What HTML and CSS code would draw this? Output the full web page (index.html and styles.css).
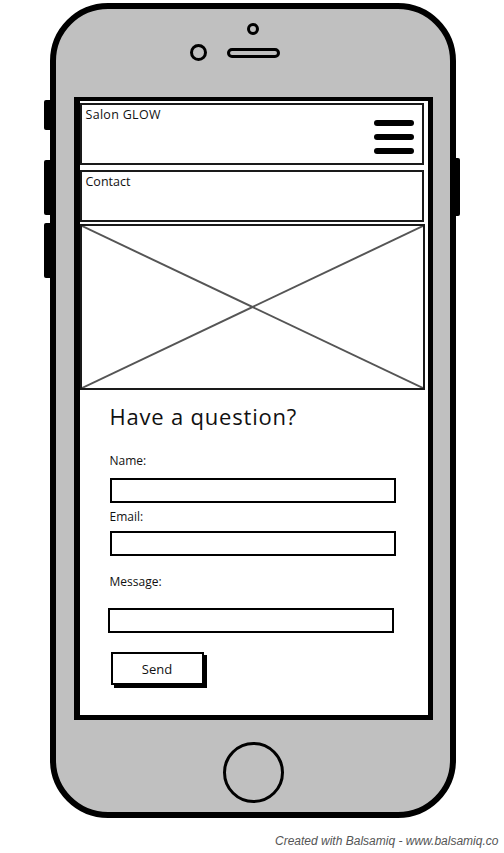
FILE: index.html
```html
<!doctype html>
<html lang="en">
<head>
	<meta charset="UTF-8">
	<title>Salon GLOW - Contact</title>
	<link rel="stylesheet" href="styles.css">
</head>
<body>
	<div class="page">
		<div class="phone">
			<span class="side-btn side-btn-1"></span>
			<span class="side-btn side-btn-2"></span>
			<span class="side-btn side-btn-3"></span>
			<span class="side-btn side-btn-r"></span>

			<span class="sensor-dot"></span>
			<div class="sensor-row">
				<span class="camera"></span>
				<span class="speaker"></span>
			</div>

			<div class="screen">
				<div class="panel header">
					<span class="brand">Salon GLOW</span>
					<a href="javascript:;" class="burger">
						<i></i><i></i><i></i>
					</a>
				</div>
				<div class="panel nav">Contact</div>
				<div class="picture">
					<svg viewBox="0 0 345 166" preserveAspectRatio="none">
						<line x1="0" y1="0" x2="345" y2="166"/>
						<line x1="345" y1="0" x2="0" y2="166"/>
					</svg>
				</div>
				<form class="form" action="javascript:;">
					<h1 class="title">Have a question?</h1>
					<label class="label label-name">Name:</label>
					<input class="field" type="text">
					<label class="label label-email">Email:</label>
					<input class="field" type="text">
					<label class="label label-msg">Message:</label>
					<input class="field field-msg" type="text">
					<button class="send" type="button">Send</button>
				</form>
			</div>

			<span class="home"></span>
		</div>
		<p class="credit">Created with Balsamiq - www.balsamiq.co</p>
	</div>
</body>
</html>
```

FILE: styles.css
```css
body{
	margin: 0;
	background: #fff;
}
.page{
	width: 504px;
	height: 853px;
	overflow: hidden;
	font-family: "Open Sans", Lato, sans-serif;
	color: #111;
}
.phone{
	position: relative;
	box-sizing: border-box;
	width: 406px;
	height: 815px;
	margin: 3px 0 0 50px;
	border: 6px solid #000;
	border-radius: 58px;
	background: #c0c0c0;
	display: flex;
	flex-direction: column;
	align-items: center;
}
/* hardware buttons on the edge */
.side-btn{
	position: absolute;
	width: 6px;
	left: -12px;
	background: #000;
	border-radius: 2px 0 0 2px;
}
.side-btn-1{
	top: 91px;
	height: 30px;
}
.side-btn-2{
	top: 151px;
	height: 55px;
}
.side-btn-3{
	top: 214px;
	height: 55px;
}
.side-btn-r{
	left: auto;
	right: -10px;
	width: 4px;
	top: 149px;
	height: 58px;
	border-radius: 0 2px 2px 0;
}
.sensor-dot{
	box-sizing: border-box;
	width: 12px;
	height: 12px;
	margin-top: 14px;
	border: 3px solid #000;
	border-radius: 50%;
}
.sensor-row{
	display: flex;
	align-items: center;
	gap: 20px;
	margin-top: 9px;
	padding-right: 37px;
}
.camera{
	box-sizing: border-box;
	width: 17px;
	height: 17px;
	border: 3px solid #000;
	border-radius: 50%;
}
.speaker{
	box-sizing: border-box;
	width: 53px;
	height: 10px;
	border: 3px solid #000;
	border-radius: 5px;
}
.screen{
	box-sizing: border-box;
	width: 359px;
	height: 623px;
	margin-top: 36px;
	border: solid #000;
	border-width: 4px 5px 5px 6px;
	background: #fff;
	display: flex;
	flex-direction: column;
}
.panel{
	box-sizing: border-box;
	width: 344px;
	border: 2px solid #1a1a1a;
	font-size: 12.5px;
	line-height: 16px;
}
.brand{
	letter-spacing: 0.3px;
}
.header{
	height: 62px;
	margin-top: 2px;
	padding: 2px 8px 0 4px;
	display: flex;
	justify-content: space-between;
	align-items: flex-start;
}
.burger{
	display: flex;
	flex-direction: column;
	gap: 8px;
	margin-top: 13px;
}
.burger i{
	display: block;
	width: 40px;
	height: 6px;
	border-radius: 3px;
	background: #000;
}
.nav{
	height: 52px;
	margin-top: 5px;
	padding: 2px 4px 0;
}
.picture{
	box-sizing: border-box;
	width: 345px;
	height: 166px;
	margin-top: 2px;
	border: 2px solid #1a1a1a;
}
.picture svg{
	display: block;
	width: 100%;
	height: 100%;
}
.picture line{
	stroke: #555;
	stroke-width: 2;
}
.form{
	display: flex;
	flex-direction: column;
	align-items: flex-start;
	padding: 13px 0 0 30px;
	margin: 0;
}
.title{
	margin: 0;
	font-size: 22px;
	font-weight: normal;
	line-height: 26px;
	letter-spacing: 0.8px;
}
.label{
	font-size: 12px;
	line-height: 15px;
}
.label-name{
	margin-top: 24px;
}
.label-email{
	margin-top: 6px;
}
.label-msg{
	margin-top: 18px;
}
.field{
	box-sizing: border-box;
	width: 286px;
	height: 25px;
	margin: 10px 0 0;
	padding: 0;
	border: 2px solid #000;
	background: #fff;
}
.label-email + .field{
	margin-top: 7px;
}
.field-msg{
	margin: 19px 0 0 -2px;
}
.send{
	box-sizing: border-box;
	width: 93px;
	height: 33px;
	margin: 19px 0 0 1px;
	border: 2px solid #000;
	background: #fff;
	box-shadow: 3px 3px 0 #000;
	font-family: inherit;
	font-size: 13px;
	color: #111;
}
.home{
	box-sizing: border-box;
	width: 61px;
	height: 61px;
	margin-top: 22px;
	border: 3px solid #000;
	border-radius: 50%;
}
.credit{
	margin: 16px 0 0;
	padding-left: 275px;
	white-space: nowrap;
	font-family: "Liberation Sans", Arial, sans-serif;
	font-style: italic;
	font-size: 12px;
	line-height: 14px;
	color: #555;
}
```
